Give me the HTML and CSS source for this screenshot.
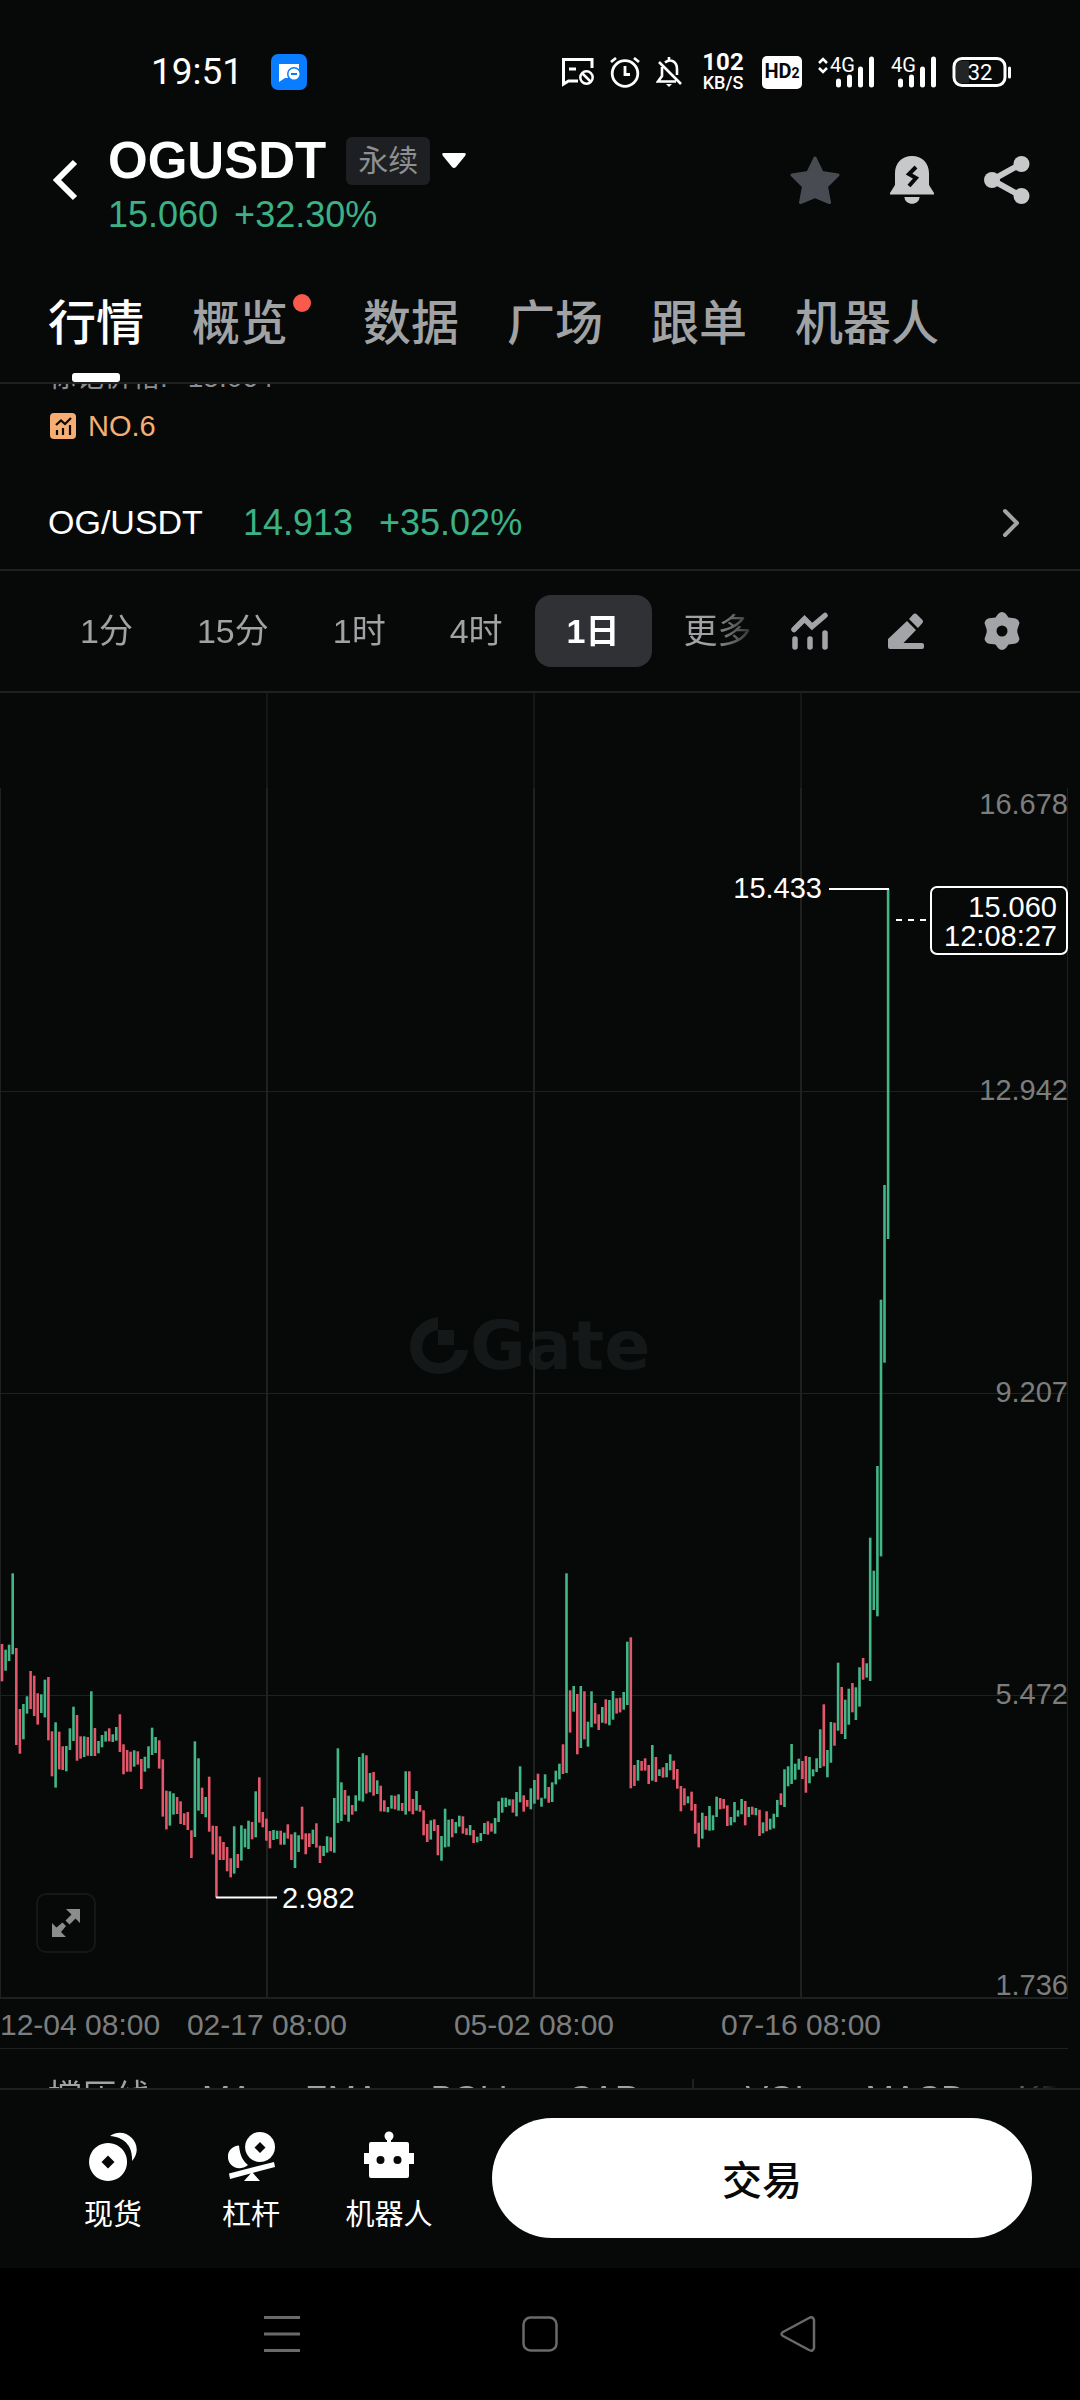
FILE: index.html
```html
<!DOCTYPE html>
<html lang="zh-CN">
<head>
    <meta charset="UTF-8">
    <meta name="viewport" content="width=device-width, initial-scale=1.0">
    <title>OGUSDT 永续</title>
    <link rel="stylesheet" href="styles.css">
</head>
<body>
    <div class="status-bar">
        <span class="time">19:51</span>
        <svg class="app-badge" width="36" height="36" viewBox="0 0 36 36">
            <rect width="36" height="36" rx="7" fill="#0a7cff"/>
            <path d="M8 10h20v14H14l-6 4z" fill="#fff"/>
            <circle cx="23" cy="20" r="7" fill="#0a7cff"/>
            <circle cx="23" cy="20" r="5.5" fill="#fff"/>
            <path d="M20 20h6" stroke="#0a7cff" stroke-width="2"/>
        </svg>
        <div class="status-icons">
            <svg width="32" height="32" viewBox="0 0 32 32" fill="none" stroke="#fff" stroke-width="3">
                <path d="M30 12V3.500H1.500V28l5-3H16M7 13h7"/>
                <circle cx="24.500" cy="21.500" r="6.200" stroke-width="2.500"/>
                <path d="M20 17l9 9" stroke-width="2.500"/>
            </svg>
            <svg width="30" height="32" viewBox="0 0 30 32" fill="none" stroke="#fff" stroke-width="2.800">
                <circle cx="15" cy="17.500" r="12.800"/>
                <path d="M15 10v8.500h5M1 6l5-4M29 6l-5-4"/>
            </svg>
            <svg width="28" height="32" viewBox="0 0 28 32" fill="none" stroke="#fff" stroke-width="2.600">
                <path d="M9 6.500C15 2 21 6 21 13v6M6 11v9l-4 5.500h18M3 6l22 22M13 1v4"/>
                <path d="M10 28h6l-3 3z" fill="#fff" stroke="none"/>
            </svg>
            <div class="net-speed"><b>102</b><span>KB/S</span></div>
            <div class="hd">HD<small>2</small></div>
            <div class="signal">
                <svg width="56" height="32" viewBox="0 0 56 32">
                    <path d="M1 7l4-4 4 4M1 12l4 4 4-4" fill="none" stroke="#fff" stroke-width="2.500"/>
                    <path d="M20.500 25v4M31.500 21v8M42.500 13v16M53.500 3v26" stroke="#fff" stroke-width="5" stroke-linecap="round"/>
                    <text class="net-type" x="12" y="16">4G</text>
                </svg>
            </div>
            <div class="signal">
                <svg width="46" height="32" viewBox="0 0 46 32">
                    <path d="M10.500 25v4M21.500 21v8M32.500 13v16M43.500 3v26" stroke="#fff" stroke-width="5" stroke-linecap="round"/>
                    <text class="net-type" x="1" y="16">4G</text>
                </svg>
            </div>
            <svg width="60" height="32" viewBox="0 0 60 32">
                <rect x="2" y="2.500" width="51" height="27" rx="8" fill="none" stroke="#fff" stroke-width="3"/>
                <path d="M9 5h8v22H9q-5 0-5-5V10q0-5 5-5z" fill="#232525"/>
                <path d="M57.500 12v9" stroke="#fff" stroke-width="3" stroke-linecap="round"/>
                <text class="battery-level" x="28" y="24" text-anchor="middle">32</text>
            </svg>
        </div>
    </div>

    <header class="header">
        <button class="icon-btn back" type="button" aria-label="返回">
            <svg width="26" height="42" viewBox="0 0 26 42" fill="none" stroke="#fff" stroke-width="6">
                <path d="M23 3L5 21l18 18"/>
            </svg>
        </button>
        <div class="pair">
            <div class="pair-top">
                <h1>OGUSDT</h1>
                <span class="tag">永续</span>
                <button class="icon-btn" type="button" aria-label="切换交易对">
                    <svg width="24" height="16" viewBox="0 0 24 16" fill="#fff">
                        <path d="M2 0h20q3 0 1 3L14 14q-2 2-4 0L1 3Q-1 0 2 0z"/>
                    </svg>
                </button>
            </div>
            <div class="pair-price"><span>15.060</span><span>+32.30%</span></div>
        </div>
        <div class="header-actions">
            <button class="icon-btn" type="button" aria-label="收藏">
                <svg width="50" height="48" viewBox="0 0 50 48" fill="#484b52" stroke="#484b52" stroke-width="3" stroke-linejoin="round">
                    <path d="M25 2l7 14.500 16 2.500-11.500 11.500L39.500 46.500 25 40.500 10.500 46.500l3-16L2 19l16-2.500z"/>
                </svg>
            </button>
            <button class="icon-btn" type="button" aria-label="价格提醒">
                <svg width="44" height="48" viewBox="0 0 44 48">
                    <path d="M22 0c10 0 17 7 17 17v12l5 8v1.500H0V37l5-8V17C5 7 12 0 22 0z" fill="#c6c8c9"/>
                    <path d="M14.500 41h15c0 9-15 9-15 0z" fill="#c6c8c9"/>
                    <path d="M26 11l-7 7 7 4-7 8" fill="none" stroke="#070909" stroke-width="4"/>
                </svg>
            </button>
            <button class="icon-btn" type="button" aria-label="分享">
                <svg width="46" height="48" viewBox="0 0 46 48" fill="#c6c8c9">
                    <path d="M37 8L8 24l29 16" fill="none" stroke="#c6c8c9" stroke-width="6"/>
                    <circle cx="37.500" cy="8" r="8"/>
                    <circle cx="8" cy="24" r="8"/>
                    <circle cx="37.500" cy="40" r="8"/>
                </svg>
            </button>
        </div>
    </header>

    <nav class="tabs">
        <a class="tab active" href="#">行情</a>
        <a class="tab has-dot" href="#">概览</a>
        <a class="tab" href="#">数据</a>
        <a class="tab" href="#">广场</a>
        <a class="tab" href="#">跟单</a>
        <a class="tab" href="#">机器人</a>
    </nav>

    <main>
        <section class="summary">
            <p class="mark-price"><span>标记价格:</span><span>15.064</span></p>
            <p class="rank">
                <svg width="26" height="26" viewBox="0 0 26 26">
                    <rect width="26" height="26" rx="4" fill="#f8ae72"/>
                    <path d="M6 12l5-4.500 4 3.500 6-6M7 17v5M13 15v7M20 12v10" fill="none" stroke="#070909" stroke-width="2.200"/>
                </svg>
                NO.6
            </p>
        </section>
        <a class="spot-row" href="#">
            <span>OG/USDT</span>
            <span class="up spot-price">14.913</span>
            <span class="up">+35.02%</span>
            <svg class="chevron" width="18" height="30" viewBox="0 0 18 30" fill="none" stroke="#a2a4a6" stroke-width="4" stroke-linecap="round" stroke-linejoin="round">
                <path d="M3 3l12 12L3 27"/>
            </svg>
        </a>

        <div class="toolbar">
            <div class="intervals">
                <button type="button">1分</button>
                <button type="button">15分</button>
                <button type="button">1时</button>
                <button type="button">4时</button>
                <button type="button" class="selected">1日</button>
                <button type="button">更多</button>
            </div>
            <div class="tools">
                <button class="icon-btn" type="button" aria-label="指标">
                    <svg width="38" height="38" viewBox="0 0 38 38" fill="none" stroke="#a2a4a8" stroke-width="5.500" stroke-linecap="round">
                        <path d="M3 17.500L13.500 7 21 14.500 34 3.500" stroke-linejoin="miter"/>
                        <path d="M4 27v8M19 27v8M34 21v14"/>
                    </svg>
                </button>
                <button class="icon-btn" type="button" aria-label="画线">
                    <svg width="38" height="38" viewBox="0 0 38 38" fill="#a2a4a8">
                        <path d="M20 9l9 9-12.500 13H35q2 0 2 2v2q0 2-2 2H3q-2 0-2-2v-8z"/>
                        <path d="M22 7l4-4.500q2-2 4 0l5 5q2 2 0 4l-4 4.500z"/>
                    </svg>
                </button>
                <button class="icon-btn" type="button" aria-label="设置">
                    <svg width="38" height="38" viewBox="0 0 38 38">
                        <path d="M15 2q4-4 8 0l2.500 3.500 4 .5q6 0 7 5l-1.500 4.500q-1.500 3.500 0 7L36.500 27q-1 5-7 5l-4 .500L23 36q-4 4-8 0l-2.500-3.500-4-.5q-6 0-7-5L3 22.500q1.500-3.500 0-7L1.500 11q1-5 7-5l4-.500z" fill="#a2a4a8"/>
                        <circle cx="19" cy="19" r="5.500" fill="#070909"/>
                    </svg>
                </button>
            </div>
        </div>

        <section class="chart">
            <svg class="chart-svg" viewBox="0 0 1080 1356">
                <g class="watermark">
                    <path d="M438 624v13c-21 3-21 32 0 33 10 0 16-6 17-13h13c-1 13-12 24-30 24-37-2-37-52 0-57z"/>
                    <path d="M438 637h16v15h-16z"/>
                    <text x="470" y="676">Gate</text>
                </g>
                <g class="grid">
                    <path class="faint" d="M267 0v95M534 0v95M801 0v95"/>
                    <path d="M267 95v1209M534 95v1209M801 95v1209" stroke-width="2"/>
                    <path d="M.5 95v1209M1067.500 95v1209M0 398.500h1068M0 700.500h1068M0 1002.500h1068M0 1355.500h1068"/>
                    <path d="M0 1305h1068" stroke-width="2"/>
                </g>
                <g id="candles"></g>
                <g class="axis" text-anchor="end">
                    <text x="1068" y="121">16.678</text>
                    <text x="1068" y="407">12.942</text>
                    <text x="1068" y="709">9.207</text>
                    <text x="1068" y="1011">5.472</text>
                    <text x="1068" y="1302">1.736</text>
                </g>
                <g class="axis dates" text-anchor="middle">
                    <text x="0" y="1342" text-anchor="start">12-04 08:00</text>
                    <text x="267" y="1342">02-17 08:00</text>
                    <text x="534" y="1342">05-02 08:00</text>
                    <text x="801" y="1342">07-16 08:00</text>
                </g>
                <g class="marks">
                    <path d="M829 196h60M216 1204.500h61"/>
                    <path d="M896 227h32" stroke-dasharray="6 6"/>
                    <text x="822" y="205" text-anchor="end">15.433</text>
                    <text x="282" y="1215">2.982</text>
                    <rect x="931" y="194" width="136" height="67" rx="6"/>
                    <text x="1057" y="224" text-anchor="end">15.060</text>
                    <text x="1057" y="253" text-anchor="end">12:08:27</text>
                </g>
            </svg>
            <button class="expand" type="button" aria-label="全屏">
                <svg width="30" height="30" viewBox="0 0 30 30" fill="#8b8d8d">
                    <path d="M15 1h14v14l-4.500-4.500-6 6-4-4 6-6z"/>
                    <path d="M1 15l4.500 4.500 6-5 3.500 3.500-5 6L15 29H1z"/>
                </svg>
            </button>
        </section>

        <div class="indicators">
            <button type="button">撑压线</button>
            <button type="button">MA</button>
            <button type="button">EMA</button>
            <button type="button">BOLL</button>
            <button type="button">SAR</button>
            <span class="divider"></span>
            <button type="button">VOL</button>
            <button type="button">MACD</button>
            <button type="button">KDJ</button>
        </div>
    </main>

    <footer class="trade-bar">
        <a class="shortcut" href="#">
            <svg width="50" height="50" viewBox="0 0 50 50" fill="#fff">
                <path d="M22 5c16-11 36 9 22 25C45 15 36 6 22 5z"/>
                <path fill-rule="evenodd" d="M20 12a19 19 0 1 0 .1 0zM20 24.500l6.500 6.500-6.500 6.500-6.500-6.500z"/>
            </svg>
            现货
        </a>
        <a class="shortcut" href="#">
            <svg width="50" height="50" viewBox="0 0 50 50" fill="#fff">
                <path fill-rule="evenodd" d="M34 1a15 15 0 1 0 .1 0zM34 11l5.500 5.500L34 22l-5.500-5.500z"/>
                <path d="M13 14.500C14 25 17 30 22 34 12 42 1 34 2 25c0-6 5-10 11-10.500z"/>
                <path d="M3 42.500L48 31l1 5L4 48zM26 41l8 9H18z"/>
            </svg>
            杠杆
        </a>
        <a class="shortcut" href="#">
            <svg width="50" height="50" viewBox="0 0 50 50" fill="#fff">
                <circle cx="25" cy="5" r="4.500"/>
                <path d="M23 5h4v6h16q2 0 2 2v9h5v11h-5v12q0 2-2 2H7q-2 0-2-2V33H0V22h5v-9q0-2 2-2h16z"/>
                <circle cx="16.500" cy="29" r="4" fill="#070909"/>
                <circle cx="33.500" cy="29" r="4" fill="#070909"/>
            </svg>
            机器人
        </a>
        <button class="trade-btn" type="button">交易</button>
    </footer>

    <div class="system-nav">
        <button class="icon-btn" type="button" aria-label="最近任务">
            <svg width="36" height="36" viewBox="0 0 36 36" stroke="#6a6a6a" stroke-width="3">
                <path d="M0 1.500h36M0 18h36M0 34.500h36"/>
            </svg>
        </button>
        <button class="icon-btn" type="button" aria-label="主屏幕">
            <svg width="36" height="36" viewBox="0 0 36 36" fill="none" stroke="#6a6a6a" stroke-width="2.500">
                <rect x="1.500" y="1.500" width="33" height="33" rx="7"/>
            </svg>
        </button>
        <button class="icon-btn" type="button" aria-label="后退">
            <svg width="36" height="36" viewBox="0 0 36 36" fill="none" stroke="#6a6a6a" stroke-width="2.500">
                <path d="M3 16L29 2q4-2 5 2v28q-1 4-5 2L3 20q-3-2 0-4z"/>
            </svg>
        </button>
    </div>

    <script src="chart.js"></script>
</body>
</html>
```

FILE: chart.js
```js
// one entry per day: direction (u/d), high, low
// high and low count down from BASE, three steps to a chart unit
var BASE = 847;
var STEP = 3.573;
var data =
    "d312,424 u329,392 u314,363 u100,343 d324,615 d507,641 u492,598 u469,521 d393,507 d407,528 " +
    "d460,554 u463,519 u419,532 d411,601 d574,709 u547,743 d575,688 d619,690 u618,694 u565,630 " +
    "u500,603 d525,662 d589,656 u589,651 d591,647 u454,648 d564,648 u603,640 u585,622 u574,605 " +
    "d565,604 u583,606 u561,602 d523,636 d613,703 d630,695 d635,695 u631,680 d634,674 d657,747 " +
    "u650,695 u619,685 u563,645 u591,639 d601,686 d658,830 d752,868 u754,857 u760,824 d771,822 " +
    "d784,852 d820,855 d816,870 d871,954 u604,891 u655,812 d743,822 u771,832 d710,875 d857,943 " +
    "d858,1073 d889,960 d906,960 d921,994 d955,1012 u859,1001 d942,984 u856,962 u866,922 u842,927 " +
    "d846,898 u754,892 d712,848 d816,862 d836,902 d873,925 u870,900 u872,897 d872,914 u878,914 " +
    "d853,896 d883,960 u877,984 u886,936 d800,898 d880,943 d880,921 u869,912 d850,923 d917,969 " +
    "u918,948 u889,938 d892,934 u774,938 u625,849 u727,843 d750,824 u767,845 d795,824 u766,814 " +
    "u651,782 u640,785 d646,761 u699,757 d696,767 u721,762 d737,814 d781,815 u801,817 u766,806 " +
    "d767,808 u763,812 d789,813 u694,824 d694,814 d777,823 u753,812 d795,815 d811,886 d852,906 " +
    "u841,899 d838,873 d855,946 u888,962 u806,922 u839,920 d837,892 u846,880 u827,860 d829,881 " +
    "d865,885 u855,886 d870,909 u890,907 u879,903 u849,882 d844,884 d850,875 u834,881 u784,846 " +
    "u773,818 u773,801 u778,797 d778,818 u756,829 u679,787 d766,815 d780,800 u745,808 u720,791 " +
    "d701,779 u773,800 u703,776 d741,788 u727,786 u692,733 u671,718 d613,702 u100,699 d451,578 " +
    "u438,515 d462,643 u438,624 d454,598 u545,620 u454,562 d489,551 d523,570 u501,548 d478,551 " +
    "u480,556 u453,539 d475,521 d473,517 u456,509 u305,495 d292,745 d675,738 u660,722 d663,692 " +
    "d655,692 d675,732 u615,722 d651,726 u688,708 d682,713 u669,712 u643,691 d662,719 d687,746 " +
    "d738,814 d745,796 u769,790 d755,812 d792,881 d848,922 u818,896 d828,869 u798,872 u826,871 " +
    "u770,831 d774,808 d777,806 d796,858 u831,856 u786,847 u811,830 u777,823 d783,856 u801,831 " +
    "d800,824 u804,826 d809,888 u847,880 d814,874 u836,869 u821,865 u780,831 d760,795 u688,801 " +
    "u679,739 u612,732 u671,719 u656,689 d663,717 d648,758 u651,730 u688,709 u655,696 u568,684 " +
    "d493,679 u630,712 u546,668 d548,617 u368,572 d441,582 u479,597 u446,554 d429,517 u442,540 " +
    "u382,500 d354,419 u370,413 u-7,423 u92,210 u-222,229 u-721,49 u-1065,-532 u-1953,-903";

var group = document.getElementById('candles');
data.split(' ').forEach(function (item, i) {
    var range = item.slice(1).split(',');
    var high = BASE + range[0] / 3;
    var low = BASE + range[1] / 3;
    var rect = document.createElementNS('http://www.w3.org/2000/svg', 'rect');
    rect.setAttribute('class', item[0] === 'u' ? 'candle-up' : 'candle-down');
    rect.setAttribute('x', (0.7 + i * STEP).toFixed(1));
    rect.setAttribute('y', high.toFixed(1));
    rect.setAttribute('width', 2.6);
    rect.setAttribute('height', (low - high).toFixed(1));
    group.appendChild(rect);
});
```

FILE: styles.css
```css
* {
    box-sizing: border-box;
}
body {
    margin: 0;
    min-height: 100vh;
    display: flex;
    flex-direction: column;
    background-color: #070909;
    color: #fff;
    font-family: "Liberation Sans", "Noto Sans CJK SC", sans-serif;
    overflow-x: hidden;
}
h1, p {
    margin: 0;
}
a {
    color: inherit;
    text-decoration: none;
}
button {
    margin: 0;
    padding: 0;
    border: none;
    background: none;
    color: inherit;
    font: inherit;
    cursor: pointer;
}
svg {
    display: block;
}
.icon-btn {
    display: flex;
    align-items: center;
    justify-content: center;
}
.up {
    color: #3bb185;
}

/* status bar */
.status-bar {
    display: flex;
    align-items: center;
    height: 96px;
    padding: 48px 68px 0 151px;
    font-family: Roboto, sans-serif;
}
.time {
    font-size: 37px;
    line-height: 48px;
}
.app-badge {
    margin-left: 28px;
}
.status-icons {
    display: flex;
    align-items: center;
    gap: 16px;
    margin-left: auto;
}
.net-speed {
    display: flex;
    flex-direction: column;
    align-items: center;
    width: 46px;
}
.net-speed b {
    font-size: 24px;
    line-height: 22px;
}
.net-speed span {
    font-size: 18px;
    font-weight: 500;
    line-height: 20px;
}
.hd {
    width: 40px;
    border-radius: 5px;
    background-color: #fff;
    color: #070909;
    font-size: 20px;
    font-weight: 700;
    line-height: 31px;
    text-align: center;
}
.hd small {
    font-size: 14px;
}
.net-type {
    fill: #fff;
    font-size: 20px;
}
.battery-level {
    fill: #fff;
    font-size: 22px;
}

/* header */
.header {
    display: flex;
    align-items: center;
    height: 144px;
    padding: 24px 50px 0 48px;
}
.back {
    width: 60px;
    padding-right: 26px;
}
.pair {
    align-self: flex-start;
    padding-top: 17px;
}
.pair-top {
    display: flex;
    align-items: center;
    height: 48px;
}
h1 {
    font-size: 51px;
    line-height: 50px;
}
.tag {
    margin: 0 12px 0 20px;
    padding: 0 12px;
    border-radius: 6px;
    background-color: #1e1f22;
    color: #8d8f92;
    font-size: 30px;
    line-height: 48px;
}
.pair-price {
    display: flex;
    gap: 16px;
    margin-top: 8px;
    color: #3bb185;
    font-size: 36px;
    line-height: 44px;
}
.header-actions {
    display: flex;
    gap: 50px;
    margin-left: auto;
}

/* tabs */
.tabs {
    display: flex;
    gap: 48px;
    height: 144px;
    padding: 48px 48px 0;
    border-bottom: 2px solid #1f2121;
    color: #a0a2a4;
    font-size: 48px;
    font-weight: 500;
    line-height: 72px;
    white-space: nowrap;
}
.tab {
    position: relative;
}
.tab.active {
    color: #fff;
}
.tab.active::after {
    content: "";
    position: absolute;
    bottom: 0;
    left: 24px;
    width: 48px;
    height: 9px;
    border-radius: 3px;
    background-color: #fff;
}
.has-dot {
    padding-right: 27px;
}
.has-dot::after {
    content: "";
    position: absolute;
    top: 6px;
    right: 4px;
    width: 18px;
    height: 18px;
    border-radius: 50%;
    background-color: #fa5a4c;
}

/* summary, scrolled partly under the tabs */
main {
    flex: 1;
}
.summary {
    overflow: hidden;
    padding: 0 48px;
    font-size: 29px;
    line-height: 40px;
}
.mark-price {
    display: flex;
    gap: 20px;
    margin-top: -26px;
    color: #8b8d8f;
    font-size: 28px;
}
.rank {
    display: flex;
    align-items: center;
    gap: 12px;
    margin-top: 8px;
    padding-left: 2px;
    color: #f8ae72;
}
.spot-row {
    display: flex;
    align-items: center;
    height: 95px;
    margin-top: 30px;
    padding: 0 60px 0 48px;
    border-bottom: 2px solid #1f2121;
    font-size: 34px;
}
.spot-price {
    margin: 0 26px 0 40px;
}
.spot-row .up {
    font-size: 36px;
}
.chevron {
    margin-left: auto;
}

/* intervals */
.toolbar {
    display: flex;
    align-items: center;
    height: 122px;
    padding: 0 59px 0 48px;
    border-bottom: 2px solid #1f2121;
    color: #a0a2a4;
}
.intervals {
    display: flex;
    flex: 1;
    overflow: hidden;
    mask-image: linear-gradient(to right, #000 92%, transparent);
}
.intervals button {
    flex-shrink: 0;
    padding: 0 32px;
    border-radius: 16px;
    font-size: 34px;
    line-height: 72px;
}
.intervals button:last-child {
    padding-right: 8px;
}
.intervals .selected {
    background-color: #303134;
    color: #fff;
    font-weight: 700;
}
.tools {
    display: flex;
    gap: 58px;
    margin-left: 24px;
}

/* chart */
.chart {
    position: relative;
}
.chart-svg {
    width: 100%;
    height: auto;
}
.watermark {
    fill: #151818;
}
.watermark text {
    font-family: "DejaVu Sans", sans-serif;
    font-size: 68px;
    font-weight: 700;
}
.grid path {
    fill: none;
    stroke: #1f2121;
}
.grid .faint {
    stroke: #151717;
    stroke-width: 2;
}
.candle-up {
    fill: #43b688;
}
.candle-down {
    fill: #e4566a;
}
.axis {
    fill: #7c7e7e;
    font-size: 29px;
}
.dates {
    font-size: 30px;
}
.marks {
    fill: #fff;
    font-size: 29px;
}
.marks path {
    stroke: #fff;
    stroke-width: 2;
}
.marks rect {
    fill: #070909;
    stroke: #fff;
    stroke-width: 2;
}
.expand {
    position: absolute;
    left: 36px;
    bottom: 96px;
    display: flex;
    align-items: center;
    justify-content: center;
    width: 60px;
    height: 60px;
    border: 2px solid #151717;
    border-radius: 10px;
}
.indicators {
    display: flex;
    gap: 52px;
    height: 39px;
    padding: 0 0 0 48px;
    overflow: hidden;
    color: #a0a2a4;
    font-size: 34px;
    line-height: 96px;
    mask-image: linear-gradient(to right, #000 92%, transparent 98%);
}
.indicators button {
    flex-shrink: 0;
    height: 96px;
}
.divider {
    flex-shrink: 0;
    width: 2px;
    height: 36px;
    margin-top: 30px;
    background-color: #1f2121;
}

/* bottom bars */
.trade-bar {
    display: flex;
    align-items: center;
    height: 180px;
    padding: 0 48px 2px 44px;
    border-top: 2px solid #1f2121;
}
.shortcut {
    display: flex;
    flex-direction: column;
    align-items: center;
    gap: 12px;
    width: 138px;
    padding-top: 12px;
    font-size: 29px;
    line-height: 44px;
    white-space: nowrap;
}
.trade-btn {
    flex: 1;
    height: 120px;
    margin-left: 34px;
    border-radius: 60px;
    background-color: #fff;
    color: #070909;
    font-size: 40px;
    font-weight: 500;
}
.system-nav {
    display: flex;
    align-items: center;
    justify-content: center;
    gap: 222px;
    height: 132px;
    background-color: #000;
}
```
